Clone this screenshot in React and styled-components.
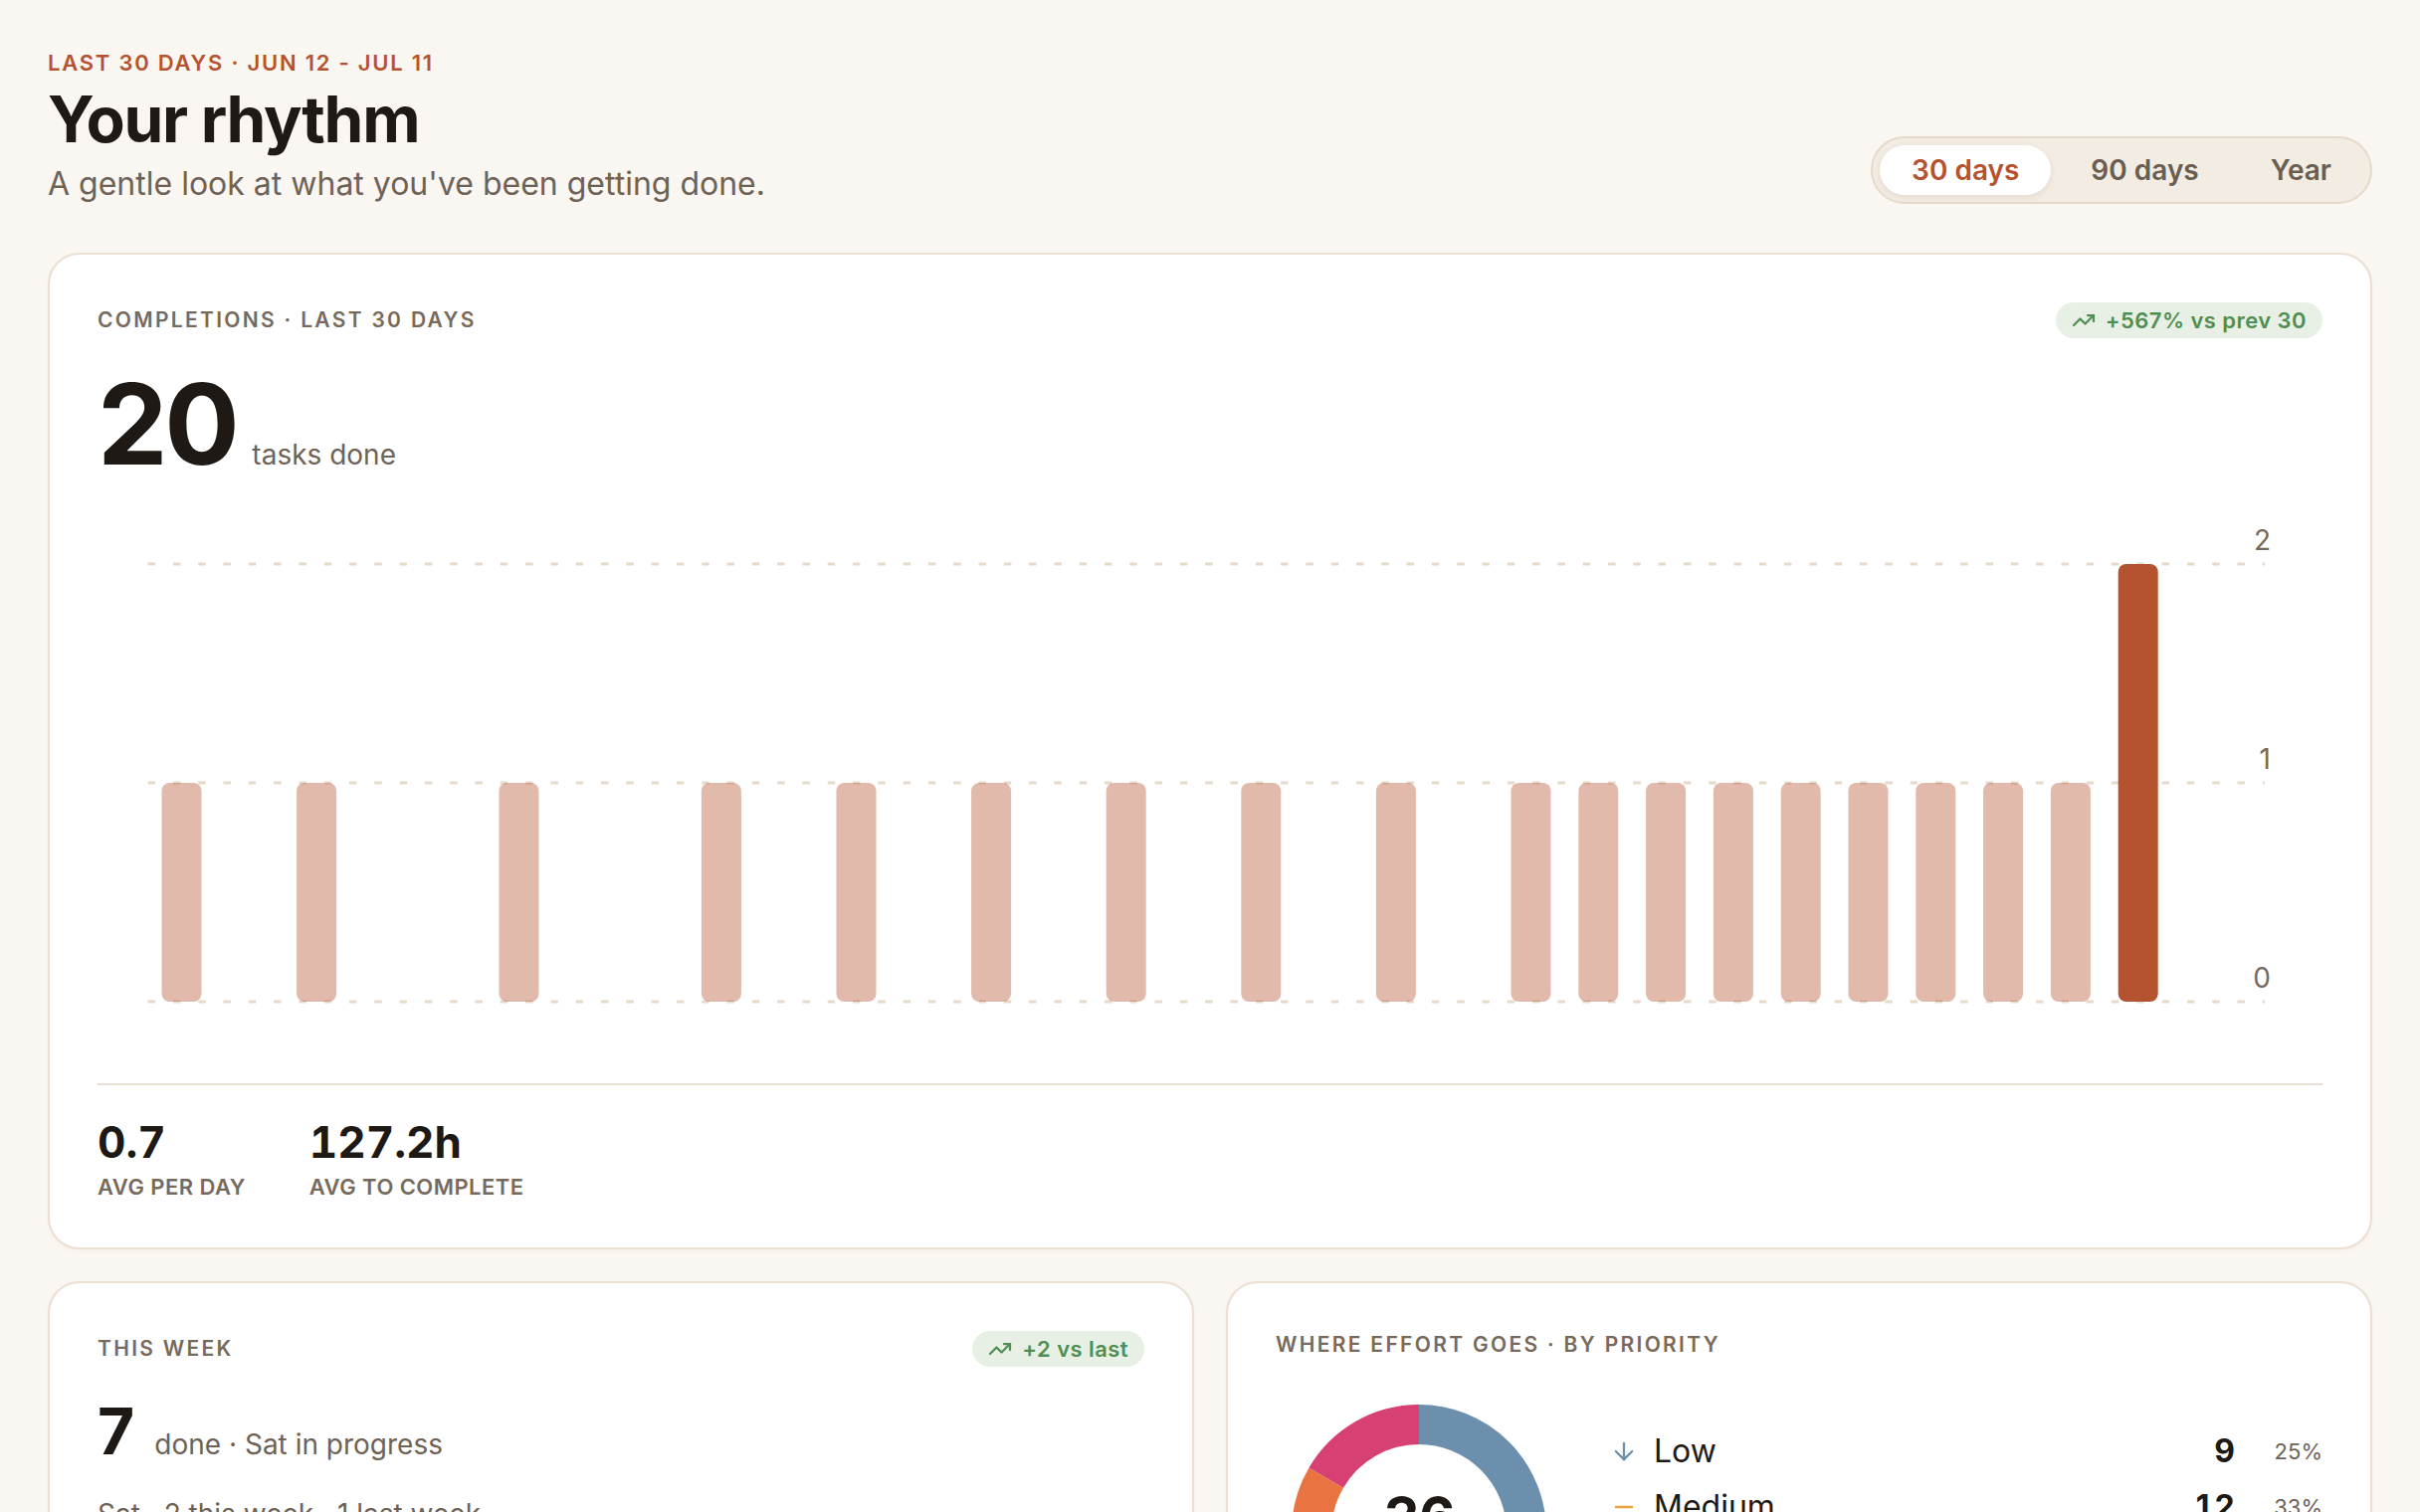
import React from 'react';
import styled, { createGlobalStyle } from 'styled-components';
import { TrendingUp, ArrowDown, ArrowUp, Minus, ChevronsUp } from 'lucide-react';

const C = {
  bg: '#FAF6F1',
  card: '#FFFFFF',
  border: '#EADFD1',
  ink: '#1E1915',
  muted: '#6E6257',
  label: '#776A5C',
  accent: '#B5522F',
  grid: '#E6DACB',
  greenBg: '#E8F0E5',
  green: '#4F8E52',
};

const GlobalStyle = createGlobalStyle`
  html, body { margin: 0; padding: 0; background: ${C.bg}; }
  body {
    font-family: Inter, "Noto Sans", "Liberation Sans", sans-serif;
    color: ${C.ink};
    -webkit-font-smoothing: antialiased;
  }
  * { box-sizing: border-box; }
`;

const Page = styled.main`
  padding: 48px 48px 64px;
  display: flex;
  flex-direction: column;
  gap: 32px;
`;

const Header = styled.header`
  display: flex;
  justify-content: space-between;
  align-items: flex-end;
  margin-bottom: 13px;
`;

const Eyebrow = styled.div`
  font-size: 22px;
  font-weight: 600;
  letter-spacing: 0.08em;
  line-height: 1.4;
  color: ${C.accent};
  text-transform: uppercase;
`;

const Title = styled.h1`
  margin: 6px 0 0;
  font-size: 64px;
  font-weight: 700;
  letter-spacing: -0.02em;
  line-height: 1.1;
  color: ${C.ink};
`;

const Subtitle = styled.p`
  margin: 6px 0 0;
  font-size: 32px;
  line-height: 1.5;
  color: ${C.muted};
`;

const Segmented = styled.div`
  display: flex;
  gap: 8px;
  padding: 7px;
  margin-bottom: 4px;
  background: #F3ECE3;
  border: 2px solid #E6D9C9;
  border-radius: 999px;
`;

const SegButton = styled.button`
  height: 50px;
  padding: 0 32px;
  border: 0;
  border-radius: 999px;
  font-family: inherit;
  font-size: 28px;
  font-weight: 600;
  line-height: 1;
  cursor: pointer;
  color: ${(p) => (p.$active ? C.accent : '#6A5D51')};
  background: ${(p) => (p.$active ? '#FFFFFF' : 'transparent')};
  box-shadow: ${(p) => (p.$active ? '0 2px 6px rgba(110, 80, 50, 0.12)' : 'none')};
`;

const Card = styled.section`
  background: ${C.card};
  border: 2px solid ${C.border};
  border-radius: 32px;
  padding: 48px;
  box-shadow: 0 2px 4px rgba(120, 90, 60, 0.04);
  min-width: 0;
`;

const CardHeader = styled.div`
  display: flex;
  justify-content: space-between;
  align-items: center;
`;

const CardLabel = styled.div`
  font-size: 21px;
  font-weight: 600;
  letter-spacing: 0.11em;
  line-height: 28px;
  color: ${C.label};
  text-transform: uppercase;
`;

const Badge = styled.span`
  display: inline-flex;
  align-items: center;
  gap: 10px;
  height: 36px;
  padding: 0 16px;
  border-radius: 999px;
  background: ${C.greenBg};
  color: ${C.green};
  font-size: 22px;
  font-weight: 600;
  letter-spacing: 0.02em;
`;

const BigRow = styled.div`
  display: flex;
  align-items: baseline;
  gap: ${(p) => p.$gap || 16}px;
  margin-top: ${(p) => p.$top || 30}px;
`;

const BigNumber = styled.span`
  font-size: ${(p) => p.$size}px;
  font-weight: 700;
  line-height: 1;
  letter-spacing: -0.03em;
  color: ${C.ink};
`;

const BigUnit = styled.span`
  font-size: 28px;
  line-height: 1.5;
  color: ${C.muted};
`;

const ChartSvg = styled.svg`
  display: block;
  margin-top: 39px;
  width: 100%;
  height: 520px;
  overflow: visible;

  text {
    font-family: Inter, "Noto Sans", sans-serif;
    font-size: 28px;
    fill: ${C.label};
  }
`;

const Divider = styled.div`
  height: 2px;
  margin-top: 48px;
  background: ${C.border};
`;

const StatsRow = styled.div`
  display: flex;
  gap: 64px;
  padding-top: 33px;
`;

const Stat = styled.div`
  display: flex;
  flex-direction: column;
`;

const StatValue = styled.div`
  font-size: 44px;
  font-weight: 700;
  line-height: 1.1;
  letter-spacing: 0;
  font-variant-numeric: tabular-nums;
  color: ${C.ink};
`;

const StatLabel = styled.div`
  margin-top: 7px;
  font-size: 22px;
  font-weight: 600;
  line-height: 26px;
  letter-spacing: 0.02em;
  color: ${C.label};
  text-transform: uppercase;
`;

const BottomGrid = styled.div`
  display: grid;
  grid-template-columns: 1fr 1fr;
  gap: 32px;
`;

const Caption = styled.div`
  margin-top: 28px;
  font-size: 28px;
  line-height: 1.5;
  color: ${C.muted};
`;

const WeekBars = styled.div`
  display: grid;
  grid-template-columns: repeat(7, 1fr);
  gap: 16px;
  margin-top: 32px;
  height: 200px;
  align-items: end;
`;

const WeekCol = styled.div`
  display: flex;
  flex-direction: column;
  align-items: center;
  gap: 12px;
`;

const WeekBar = styled.div`
  width: 100%;
  border-radius: 10px;
  background: ${(p) => (p.$today ? C.accent : 'rgba(181, 82, 47, 0.35)')};
`;

const WeekDay = styled.span`
  font-size: 22px;
  color: ${C.label};
`;

const EffortBody = styled.div`
  display: flex;
  align-items: center;
  margin-top: 46px;
`;

const DonutWrap = styled.div`
  position: relative;
  flex: 0 0 288px;
  display: flex;
  justify-content: center;
`;

const DonutCenter = styled.div`
  position: absolute;
  inset: 0;
  display: flex;
  flex-direction: column;
  align-items: center;
  justify-content: center;
`;

const DonutNumber = styled.span`
  font-size: 56px;
  font-weight: 700;
  line-height: 1;
  letter-spacing: -0.02em;
  font-variant-numeric: tabular-nums;
  color: ${C.ink};
`;

const DonutCaption = styled.span`
  font-size: 22px;
  line-height: 28px;
  color: ${C.muted};
`;

const Legend = styled.ul`
  flex: 1;
  margin: 6px 0 0 48px;
  padding: 0;
  list-style: none;
  display: flex;
  flex-direction: column;
  gap: 16px;
`;

const LegendRow = styled.li`
  display: flex;
  align-items: center;
  height: 40px;
`;

const LegendIcon = styled.span`
  display: flex;
  width: 28px;
  margin-right: 16px;
  color: ${(p) => p.$color};
`;

const LegendName = styled.span`
  flex: 1;
  font-size: 32px;
  line-height: 40px;
  color: ${C.ink};
`;

const LegendCount = styled.span`
  font-size: 32px;
  font-weight: 700;
  line-height: 40px;
  font-variant-numeric: tabular-nums;
  color: ${C.ink};
`;

const LegendPct = styled.span`
  width: 64px;
  margin-left: 24px;
  text-align: right;
  font-size: 22px;
  color: ${C.muted};
`;

const ones = [0, 2, 5, 8, 10, 12, 14, 16, 18, 20, 21, 22, 23, 24, 25, 26, 27, 28];
const days = Array.from({ length: 30 }, (_, i) => (i === 29 ? 2 : ones.includes(i) ? 1 : 0));

function CompletionsChart() {
  const x0 = 50.6;
  const slot = 67.8;
  const barW = 40;
  const gridEnd = 2178;
  const unit = 220;
  const base = 486;
  const y = (v) => base - v * unit;
  return (
    <ChartSvg viewBox="0 0 2236 520" preserveAspectRatio="none">
      {[0, 1, 2].map((v) => (
        <line
          key={`g${v}`}
          x1={x0}
          x2={gridEnd}
          y1={y(v)}
          y2={y(v)}
          stroke={C.grid}
          strokeWidth="3"
          strokeDasharray="7.5 17.8"
        />
      ))}
      {days.map((v, i) =>
        v > 0 ? (
          <rect
            key={i}
            x={x0 + slot * i + (slot - barW) / 2}
            y={y(v)}
            width={barW}
            height={v * unit}
            rx="8"
            fill={C.accent}
            fillOpacity={i === days.length - 1 ? 1 : 0.4}
          />
        ) : null
      )}
      {[0, 1, 2].map((v) => (
        <text key={`t${v}`} x="2184" y={y(v) - 14} textAnchor="end">
          {v}
        </text>
      ))}
    </ChartSvg>
  );
}

const priorities = [
  { name: 'Low', count: 9, color: '#6C8FAE', icon: ArrowDown },
  { name: 'Medium', count: 12, color: '#E8A33D', icon: Minus },
  { name: 'High', count: 9, color: '#EA7441', icon: ArrowUp },
  { name: 'Urgent', count: 6, color: '#D64072', icon: ChevronsUp },
];

function Donut() {
  const total = priorities.reduce((s, p) => s + p.count, 0);
  const r = 108;
  const circ = 2 * Math.PI * r;
  let acc = 0;
  return (
    <DonutWrap>
      <svg width="256" height="256" viewBox="0 0 256 256">
        <g transform="rotate(-90 128 128)">
          {priorities.map((p) => {
            const len = (p.count / total) * circ;
            const el = (
              <circle
                key={p.name}
                cx="128"
                cy="128"
                r={r}
                fill="none"
                stroke={p.color}
                strokeWidth="40"
                strokeDasharray={`${len} ${circ - len}`}
                strokeDashoffset={-acc}
              />
            );
            acc += len;
            return el;
          })}
        </g>
      </svg>
      <DonutCenter>
        <DonutNumber>{total}</DonutNumber>
        <DonutCaption>tasks</DonutCaption>
      </DonutCenter>
    </DonutWrap>
  );
}

const week = [
  { d: 'Sun', v: 1 },
  { d: 'Mon', v: 1 },
  { d: 'Tue', v: 1 },
  { d: 'Wed', v: 1 },
  { d: 'Thu', v: 1 },
  { d: 'Fri', v: 0 },
  { d: 'Sat', v: 2, today: true },
];

export default function App() {
  return (
    <>
      <GlobalStyle />
      <Page>
        <Header>
          <div>
            <Eyebrow>Last 30 days · Jun 12 - Jul 11</Eyebrow>
            <Title>Your rhythm</Title>
            <Subtitle>A gentle look at what you've been getting done.</Subtitle>
          </div>
          <Segmented>
            <SegButton $active>30 days</SegButton>
            <SegButton>90 days</SegButton>
            <SegButton>Year</SegButton>
          </Segmented>
        </Header>

        <Card>
          <CardHeader>
            <CardLabel>Completions · Last 30 days</CardLabel>
            <Badge>
              <TrendingUp size={24} strokeWidth={2.25} />
              +567% vs prev 30
            </Badge>
          </CardHeader>
          <BigRow>
            <BigNumber $size={112}>20</BigNumber>
            <BigUnit>tasks done</BigUnit>
          </BigRow>
          <CompletionsChart />
          <Divider />
          <StatsRow>
            <Stat>
              <StatValue>0.7</StatValue>
              <StatLabel>Avg per day</StatLabel>
            </Stat>
            <Stat>
              <StatValue>127.2h</StatValue>
              <StatLabel>Avg to complete</StatLabel>
            </Stat>
          </StatsRow>
        </Card>

        <BottomGrid>
          <Card>
            <CardHeader>
              <CardLabel>This week</CardLabel>
              <Badge>
                <TrendingUp size={24} strokeWidth={2.25} />
                +2 vs last
              </Badge>
            </CardHeader>
            <BigRow $gap={22} $top={33}>
              <BigNumber $size={64}>7</BigNumber>
              <BigUnit>done · Sat in progress</BigUnit>
            </BigRow>
            <Caption>Sat · 2 this week · 1 last week</Caption>
            <WeekBars>
              {week.map((w) => (
                <WeekCol key={w.d}>
                  <WeekBar $today={w.today} style={{ height: `${Math.max(w.v * 70, 6)}px` }} />
                  <WeekDay>{w.d}</WeekDay>
                </WeekCol>
              ))}
            </WeekBars>
          </Card>

          <Card>
            <CardHeader>
              <CardLabel>Where effort goes · By priority</CardLabel>
            </CardHeader>
            <EffortBody>
              <Donut />
              <Legend>
                {priorities.map((p) => {
                  const Icon = p.icon;
                  return (
                    <LegendRow key={p.name}>
                      <LegendIcon $color={p.color}>
                        <Icon size={28} strokeWidth={2} />
                      </LegendIcon>
                      <LegendName>{p.name}</LegendName>
                      <LegendCount>{p.count}</LegendCount>
                      <LegendPct>{Math.round((p.count / 36) * 100)}%</LegendPct>
                    </LegendRow>
                  );
                })}
              </Legend>
            </EffortBody>
          </Card>
        </BottomGrid>
      </Page>
    </>
  );
}
